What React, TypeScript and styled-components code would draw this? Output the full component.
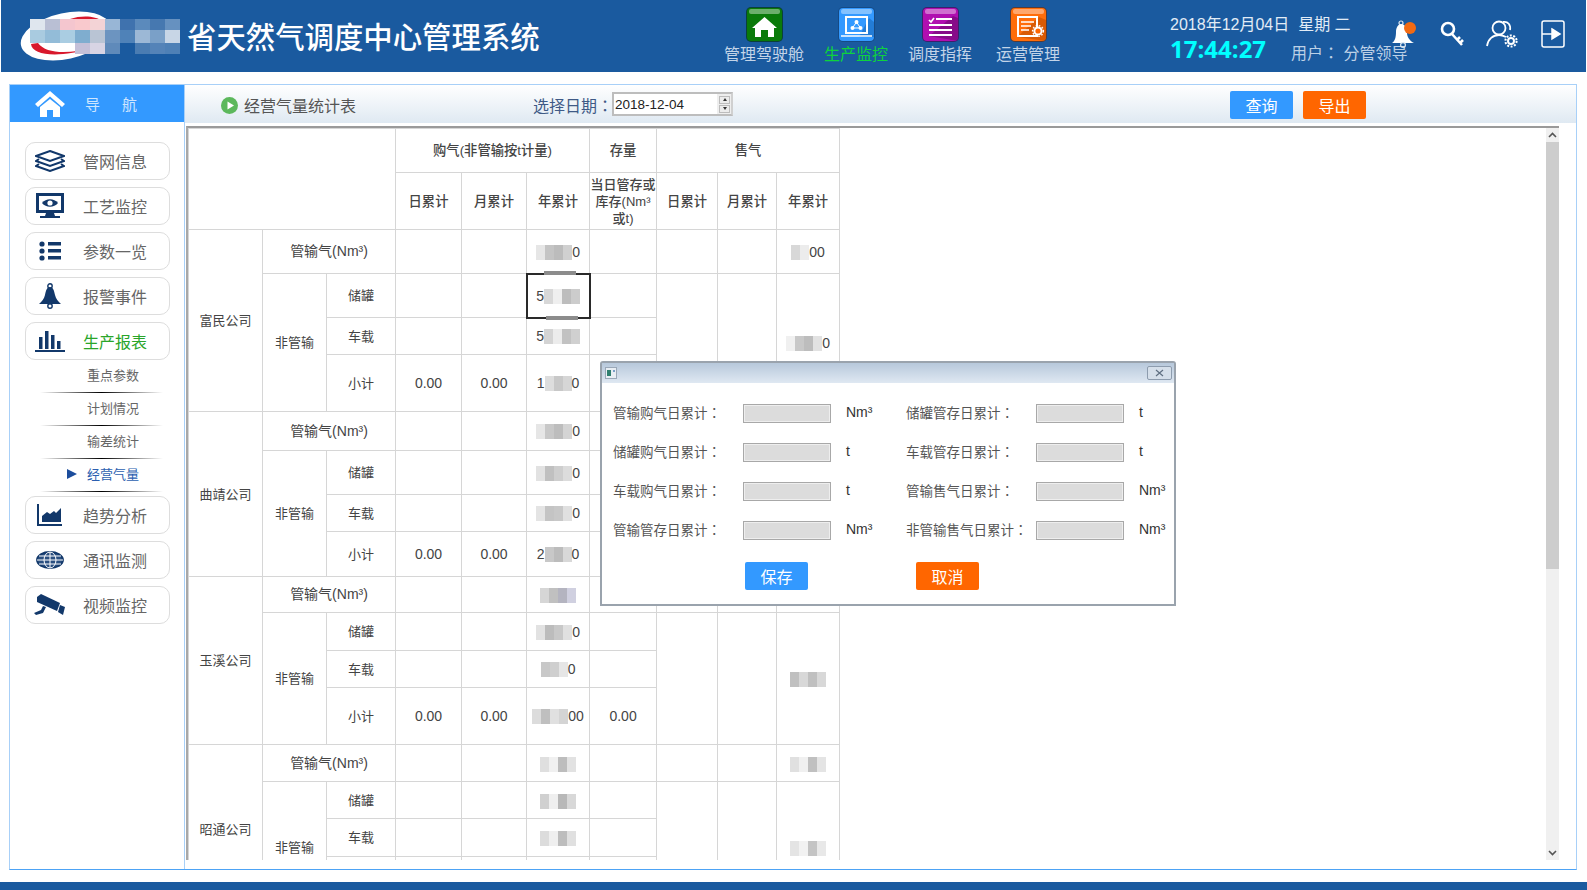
import React from "react";
import styled, { createGlobalStyle } from "styled-components";

const GlobalStyle = createGlobalStyle`
  html, body {
    margin: 0;
    padding: 0;
    background: #fff;
  }
  body {
    width: 1587px;
    height: 890px;
    overflow: hidden;
    font-family: "Liberation Sans", "Noto Sans CJK SC", sans-serif;
  }
`;

const Page = styled.div`
  width: 1587px;
  height: 890px;
  display: flex;
  flex-direction: column;
`;

const Header = styled.header`
  height: 72px;
  margin: 0 1px;
  background: #1a5a9f;
  display: flex;
  align-items: flex-start;
  color: #fff;
`;

const Brand = styled.div`
  width: 723px;
  height: 72px;
  padding-left: 19px;
  box-sizing: border-box;
  display: flex;
  align-items: center;
`;

const Title = styled.h1`
  margin: 0 0 3px 2px;
  font-size: 29.4px;
  font-weight: 500;
  white-space: nowrap;
  font-family: "Noto Sans CJK SC", sans-serif;
`;

const Nav = styled.nav`
  display: flex;
  gap: 20px;
  padding-top: 7px;
`;

const NavItem = styled.div<{ $active?: boolean }>`
  display: flex;
  flex-direction: column;
  align-items: center;
  gap: 1px;
  font-size: 16px;
  line-height: 24px;
  color: ${(p) => (p.$active ? "#0ed33c" : "#c3d4e8")};
  &:last-child {
    margin-left: 4px;
  }
`;

const Tile = styled.div<{ $color: string }>`
  position: relative;
  width: 37px;
  height: 35px;
  box-sizing: border-box;
  border: 1px solid rgba(10, 40, 80, 0.7);
  border-radius: 5px;
  background: ${(p) => p.$color};
  overflow: hidden;
  &::before {
    content: "";
    position: absolute;
    left: 2px;
    right: 2px;
    top: 1px;
    height: 5px;
    border-radius: 2px;
    background: rgba(255, 255, 255, 0.4);
  }
  svg {
    display: block;
  }
`;

const Status = styled.div`
  margin-left: 110px;
  width: 240px;
  padding-top: 14px;
`;

const DateLine = styled.div`
  font-size: 16px;
  line-height: 22px;
  color: #e2ecf6;
  white-space: nowrap;
`;

const TimeRow = styled.div`
  display: flex;
  align-items: flex-end;
`;

const Clock = styled.div`
  font-size: 24px;
  line-height: 26px;
  margin-bottom: 4px;
  font-weight: 700;
  color: #00ffff;
  font-family: "Open Sans", sans-serif;
`;

const UserLine = styled.div`
  margin-left: 25px;
  font-size: 16px;
  line-height: 24px;
  color: #bcd0e6;
  white-space: nowrap;
`;

const Colon = styled.span`
  font-family: "Noto Sans CJK TC", sans-serif;
`;

const ToolIcons = styled.div`
  display: flex;
  align-items: center;
  gap: 22px;
  height: 68px;
  margin-left: -18px;
  svg {
    display: block;
  }
`;

const Frame = styled.div`
  position: relative;
  margin: 12px 10px 0 9px;
  height: 786px;
  box-sizing: border-box;
  border: 1px solid #a8d0f8;
  border-bottom-color: #4da3f5;
  display: flex;
`;

const Sidebar = styled.aside`
  width: 174px;
  border-right: 1px solid #a8d0f8;
  flex: none;
  display: flex;
  flex-direction: column;
`;

const SideHead = styled.div`
  height: 37px;
  background: #3399ff;
  display: flex;
  align-items: center;
  padding-left: 25px;
  color: #cfe6ff;
  font-size: 15px;
  svg {
    display: block;
  }
`;

const SideHeadText = styled.span`
  margin-left: 20px;
  letter-spacing: 22px;
`;

const SideList = styled.div`
  padding: 20px 0 0 15px;
  display: flex;
  flex-direction: column;
  gap: 7px;
`;

const SideButton = styled.div<{ $active?: boolean }>`
  width: 145px;
  height: 38px;
  box-sizing: border-box;
  border: 1px solid #dddddd;
  border-radius: 10px;
  padding-bottom: 1px;
  display: flex;
  align-items: center;
  font-size: 16px;
  color: ${(p) => (p.$active ? "#2aa52a" : "#666666")};
`;

const SideIcon = styled.span`
  width: 48px;
  display: flex;
  justify-content: center;
  margin-right: 9px;
  svg {
    display: block;
  }
`;

const SubNav = styled.div`
  margin: -7px 0 -3px;
`;

const SubItem = styled.div<{ $active?: boolean }>`
  position: relative;
  height: 33px;
  box-sizing: border-box;
  padding: 0 0 4px 62px;
  display: flex;
  align-items: center;
  font-size: 13px;
  color: ${(p) => (p.$active ? "#2c5fb0" : "#666666")};
  &::after {
    content: "";
    position: absolute;
    left: 15px;
    width: 123px;
    bottom: 0;
    height: 1px;
    background: linear-gradient(90deg, transparent, #000 50%, transparent);
  }
  ${(p) =>
    p.$active &&
    `&::before {
      content: "";
      margin-left: -20px;
      margin-right: 10px;
      border-left: 10px solid #1c4d9c;
      border-top: 5.5px solid transparent;
      border-bottom: 5.5px solid transparent;
    }`}
`;

const Main = styled.main`
  flex: 1;
  min-width: 0;
  display: flex;
  flex-direction: column;
`;

const Toolbar = styled.div`
  height: 38px;
  box-sizing: border-box;
  padding: 2px 0 0 36px;
  flex: none;
  display: flex;
  align-items: center;
  background: linear-gradient(#ffffff, #dfe9f2);
  svg {
    display: block;
  }
`;

const ToolbarTitle = styled.span`
  margin-left: 6px;
  font-size: 16px;
  color: #555555;
`;

const DateLabel = styled.span`
  margin-left: 177px;
  width: 79px;
  font-size: 16px;
  white-space: nowrap;
  color: #3f5a86;
`;

const DateBox = styled.div`
  width: 121px;
  height: 24px;
  margin-top: -2px;
  box-sizing: border-box;
  border: 2px solid #bdbdbd;
  border-right-color: #d0d0d0;
  background: linear-gradient(90deg, #fff 88%, #eeeeee 88%);
  display: flex;
  align-items: center;
  justify-content: space-between;
  padding: 0 1px 0 1px;
  font-size: 13.5px;
  color: #222;
`;

const Spin = styled.div`
  display: flex;
  flex-direction: column;
  gap: 1px;
`;

const SpinButton = styled.span<{ $down?: boolean }>`
  width: 11px;
  height: 8px;
  box-sizing: border-box;
  border: 1px solid #bcbcbc;
  background: #ececec;
  display: flex;
  align-items: center;
  justify-content: center;
  &::before {
    content: "";
    border-left: 2.5px solid transparent;
    border-right: 2.5px solid transparent;
    ${(p) => (p.$down ? "border-top: 3px solid #333;" : "border-bottom: 3px solid #333;")}
  }
`;

const ActionButton = styled.div<{ $color: string }>`
  width: 63px;
  height: 28px;
  border-radius: 2px;
  background: ${(p) => p.$color};
  color: #fff;
  font-size: 16px;
  display: flex;
  align-items: center;
  justify-content: center;
`;

const ToolbarActions = styled.div`
  margin-left: auto;
  margin-right: 210px;
  display: flex;
  gap: 10px;
`;

const Pane = styled.div`
  margin: 3px 17px 0 1px;
  height: 734px;
  border-top: 2px solid #9a9a9a;
  border-left: 2px solid #a8a8a8;
  box-sizing: border-box;
  display: flex;
  overflow: hidden;
`;

const TableArea = styled.div`
  flex: 1;
  overflow: hidden;
`;

const Sheet = styled.table`
  border-collapse: collapse;
  table-layout: fixed;
  width: 651px;
  font-size: 13px;
  color: #444444;
`;

const Row = styled.tr<{ $h: number }>`
  height: ${(p) => p.$h}px;
`;

const Cell = styled.td<{ $selected?: boolean }>`
  position: relative;
  border: 1px solid #d6d6d6;
  padding: 0;
  text-align: center;
  vertical-align: middle;
  line-height: 17px;
  ${(p) =>
    p.$selected &&
    `outline: 2px solid #2a2a2a;
     outline-offset: -1px;
     &::before, &::after {
       content: "";
       position: absolute;
       left: 17px;
       width: 32px;
       height: 4px;
       background: #8c8c8c;
     }
     &::before { top: -3px; }
     &::after { bottom: -3px; left: 19px; }`}
`;

const PipeCell = styled(Cell)`
  font-size: 14px;
`;

const HeadCell = styled(Cell).attrs({ as: "th" })`
  font-weight: 500;
  font-size: 13.3px;
`;

const TallHeadText = styled.span`
  display: block;
  margin: 0 -2px;
  white-space: nowrap;
  font-size: 13px;
`;

const Value = styled.span`
  font-size: 14px;
`;

const Mask = styled.span`
  display: inline-flex;
  align-items: center;
  font-size: 14px;
  vertical-align: middle;
`;

const MaskChip = styled.span<{ $shade: string }>`
  width: 9px;
  height: 15px;
  background: ${(p) => p.$shade};
`;

const ScrollBar = styled.div`
  width: 13px;
  flex: none;
  background: #f0f0f0;
  display: flex;
  flex-direction: column;
  align-items: center;
  height: 100%;
`;

const ScrollArrow = styled.span`
  height: 14px;
  flex: none;
  display: flex;
  align-items: center;
  justify-content: center;
  svg {
    display: block;
  }
`;

const ScrollThumb = styled.div`
  width: 100%;
  height: 427px;
  background: #cdcdcd;
`;

const ScrollGap = styled.div`
  flex: 1;
`;

const Modal = styled.div`
  position: absolute;
  left: 590px;
  top: 276px;
  width: 576px;
  height: 245px;
  box-sizing: border-box;
  border: 2px solid #9aa3ad;
  border-radius: 3px 3px 0 0;
  background: #fff;
`;

const ModalBar = styled.div`
  height: 20px;
  background: linear-gradient(#b7c8db, #dfe8f2);
  display: flex;
  align-items: center;
  justify-content: space-between;
  padding: 0 2px 0 3px;
  svg {
    display: block;
  }
`;

const CloseButton = styled.span`
  width: 25px;
  height: 14px;
  box-sizing: border-box;
  border: 1px solid #8d9cae;
  border-radius: 2px;
  background: #d5dfea;
  display: flex;
  align-items: center;
  justify-content: center;
`;

const FieldGrid = styled.div`
  display: grid;
  grid-template-columns: 293px 1fr;
  row-gap: 20px;
  padding: 21px 0 0 11px;
`;

const Field = styled.div`
  display: flex;
  align-items: center;
  height: 19px;
  font-size: 13.5px;
  color: #555555;
`;

const FieldLabel = styled.span`
  width: 130px;
  margin-top: -3px;
  white-space: nowrap;
`;

const FieldInput = styled.span`
  width: 88px;
  height: 19px;
  box-sizing: border-box;
  border: 1px solid #a8a8a8;
  background: #dcdcdc;
  box-shadow: inset 0 0 0 1px #eeeeee;
`;

const FieldUnit = styled.span`
  margin-left: 15px;
  margin-top: -4px;
  font-size: 14px;
  color: #333333;
`;

const ModalActions = styled.div`
  display: flex;
  gap: 108px;
  margin: 22px 0 0 143px;
`;

const Footer = styled.footer`
  margin-top: 12px;
  height: 8px;
  background: #1a5a9f;
`;

function Logo() {
  const cells: (string | null)[][] = [
    ["#dfe6ee", "#b9bfd4", "#f4c6cf", "#f9c9cd", "#f3d3d6", "#98b6d6", "#3f72ae", "#5b8abc", "#4678b0", "#6691c0"],
    ["#a9cbe0", "#93bcd8", "#aacde2", "#7fadcf", "#b9c4d4", "#6c94c0", "#4f82b8", "#9cb8d6", "#7aa0c8", "#c8d6e6"],
    [null, null, null, "#c4c0d8", "#d8d4e4", "#5f8aba", "#1a5a9f", "#4a7cb2", "#5483b8", "#4e80b6"],
  ];
  const rowY = [9, 20, 33];
  const rowH = [11, 13, 11];
  return (
    <svg width="165" height="52" viewBox="0 0 165 52">
      <ellipse cx="46" cy="26" rx="46" ry="23" fill="#fff" transform="rotate(-12 46 26)" />
      <path d="M11 34 C12 46 40 48 73 38 C48 44 26 44 18 33 Z" fill="#d8182c" />
      <path d="M50 9 C62 5 76 6 82 11 C72 9 62 9 50 11 Z" fill="#d8182c" />
      {cells.map((row, r) =>
        row.map((c, i) =>
          c ? <rect key={`${r}-${i}`} x={10 + i * 15} y={rowY[r]} width="15" height={rowH[r]} fill={c} /> : null
        )
      )}
    </svg>
  );
}

const HomeTileIcon = () => (
  <svg width="35" height="33" viewBox="0 0 35 33">
    <path d="M17.5 9 L30 20 H27 V29 H21 V22 H14 V29 H8 V20 H5 Z" fill="#fff" />
  </svg>
);

const ScreenTileIcon = () => (
  <svg width="35" height="33" viewBox="0 0 35 33" fill="none" stroke="#fff">
    <path d="M20 29 L35 29 L35 14 L30 10 Z" fill="#1d6fc4" stroke="none" opacity="0.7" />
    <rect x="7" y="9" width="21" height="16" strokeWidth="2" />
    <path d="M2 28 H33" strokeWidth="1.5" />
    <circle cx="17.5" cy="14" r="2" fill="#fff" stroke="none" />
    <circle cx="13.5" cy="20" r="2" fill="#fff" stroke="none" />
    <circle cx="21.5" cy="20" r="2" fill="#fff" stroke="none" />
    <path d="M17.5 14 L13.5 20 H21.5 Z" strokeWidth="1" />
  </svg>
);

const ListTileIcon = () => (
  <svg width="35" height="33" viewBox="0 0 35 33" fill="none" stroke="#fff">
    <path d="M6 28 L35 33 L35 10 L30 8 Z" fill="#6d0a70" stroke="none" opacity="0.6" />
    <path d="M6 12 L8 14 L11 10" strokeWidth="1.6" />
    <path d="M13 11 H29 M6 17 H29 M6 22 H29 M6 27 H29" strokeWidth="2" />
  </svg>
);

const DocTileIcon = () => (
  <svg width="35" height="33" viewBox="0 0 35 33" fill="none" stroke="#fff">
    <path d="M6 29 L35 33 L35 12 L28 9 Z" fill="#c04f00" stroke="none" opacity="0.6" />
    <rect x="7" y="9" width="19" height="19" strokeWidth="2" />
    <path d="M10 14 H23 M10 18 H20 M10 22 H18" strokeWidth="1.5" />
    <circle cx="27" cy="23" r="3.6" fill="#ff6600" strokeWidth="2" />
    <circle cx="27" cy="23" r="5.4" strokeWidth="1.4" strokeDasharray="1.6 1.6" />
  </svg>
);

const BellHeaderIcon = () => (
  <svg width="26" height="30" viewBox="0 0 26 30">
    <circle cx="9" cy="4" r="2" fill="none" stroke="#dfe8f2" strokeWidth="1.2" />
    <path d="M9 5 C13 5 15 9 15 14 C15 18 18 22 22 24 H0 C3 22 4 18 4 13 C4 9 6 5 9 5 Z" fill="#fff" />
    <circle cx="11" cy="26" r="2.4" fill="none" stroke="#dfe8f2" strokeWidth="1.2" />
    <circle cx="18" cy="9" r="6" fill="#f26a12" />
  </svg>
);

const KeyHeaderIcon = () => (
  <svg width="24" height="26" viewBox="0 0 24 26" fill="none" stroke="#fff" strokeWidth="2.6">
    <circle cx="8" cy="8" r="6" />
    <path d="M12 13 L22 24 M17 19 L20 16 M20 22 L23 19" />
  </svg>
);

const UserHeaderIcon = () => (
  <svg width="33" height="30" viewBox="0 0 33 30" fill="none" stroke="#fff" strokeWidth="1.8">
    <circle cx="13" cy="9" r="6.5" />
    <path d="M1 27 C2 20 7 16 13 16 C16 16 18 17 20 18" />
    <path d="M17 3 C22 2 25 6 24 11" />
    <circle cx="25" cy="22" r="3" strokeWidth="2" />
    <circle cx="25" cy="22" r="5.6" strokeWidth="2" strokeDasharray="2 1.5" />
  </svg>
);

const ExitHeaderIcon = () => (
  <svg width="24" height="28" viewBox="0 0 24 28" fill="none" stroke="#fff" strokeWidth="1.5">
    <rect x="1" y="1" width="22" height="26" rx="2" />
    <path d="M1 14 H11" />
    <path d="M11 9 L19 14 L11 19 Z" fill="#fff" />
  </svg>
);

const navy = "#12386a";

const LayersIcon = () => (
  <svg width="30" height="22" viewBox="0 0 30 22" fill="none" stroke={navy} strokeWidth="2">
    <path d="M15 1 L29 6 L15 11 L1 6 Z" />
    <path d="M4 9 L1 11 L15 16 L29 11 L26 9" />
    <path d="M4 14 L1 16 L15 21 L29 16 L26 14" />
  </svg>
);

const ScreenIcon = () => (
  <svg width="28" height="25" viewBox="0 0 28 25">
    <rect x="1.5" y="1.5" width="25" height="17" fill="none" stroke={navy} strokeWidth="3" />
    <path d="M6 10 C10 5 18 5 22 10 C18 15 10 15 6 10 Z" fill={navy} />
    <circle cx="14" cy="10" r="2.6" fill="#fff" />
    <path d="M10 20 H18 L19 23 H24 V25 H4 V23 H9 Z" fill={navy} />
  </svg>
);

const ListIcon = () => (
  <svg width="22" height="20" viewBox="0 0 22 20" fill={navy}>
    <circle cx="3" cy="3" r="2.6" />
    <circle cx="3" cy="10" r="2.6" />
    <circle cx="3" cy="17" r="2.6" />
    <rect x="9" y="1" width="13" height="3.5" />
    <rect x="9" y="8" width="13" height="3.5" />
    <rect x="9" y="15" width="13" height="3.5" />
  </svg>
);

const BellIcon = () => (
  <svg width="24" height="26" viewBox="0 0 24 26">
    <circle cx="12" cy="3" r="2.2" fill="none" stroke={navy} strokeWidth="1.4" />
    <path d="M12 4 C15 4 16 7 17 12 C18 16 20 18 23 21 H1 C4 18 6 16 7 12 C8 7 9 4 12 4 Z" fill={navy} />
    <circle cx="12" cy="23" r="2.2" fill="none" stroke={navy} strokeWidth="1.4" />
  </svg>
);

const BarsIcon = () => (
  <svg width="30" height="22" viewBox="0 0 30 22" fill={navy}>
    <rect x="4" y="7" width="3.5" height="12" />
    <rect x="10" y="1" width="3.5" height="18" />
    <rect x="16" y="5" width="3.5" height="14" />
    <rect x="22" y="11" width="3.5" height="8" />
    <rect x="0" y="20" width="30" height="2" />
  </svg>
);

const AreaIcon = () => (
  <svg width="26" height="22" viewBox="0 0 26 22" fill={navy}>
    <rect x="0" y="0" width="2" height="22" />
    <rect x="0" y="20" width="25" height="2" />
    <path d="M5 18 V12 L10 8 L13 10 L17 7 L19 9 L24 4 V18 Z" />
  </svg>
);

const GlobeIcon = () => (
  <svg width="28" height="18" viewBox="0 0 28 18" fill="none" stroke={navy} strokeWidth="1.8">
    <ellipse cx="14" cy="9" rx="13" ry="8" fill="#2a4f80" />
    <ellipse cx="14" cy="9" rx="6" ry="8" stroke="#fff" strokeWidth="1" />
    <path d="M14 1 V17 M1 9 H27 M3 5 H25 M3 13 H25" stroke="#fff" strokeWidth="1" />
  </svg>
);

const CameraIcon = () => (
  <svg width="32" height="22" viewBox="0 0 32 22" fill={navy}>
    <path d="M3 3 L7 0 L26 9 L23 17 L3 8 Z" />
    <path d="M26 11 L31 13 L29 21 L24 18 Z" />
    <path d="M0 19 L2 21 L9 19 L12 13 L9 12 L7 16 Z" />
  </svg>
);

const sideTop = [
  { label: "管网信息", icon: <LayersIcon /> },
  { label: "工艺监控", icon: <ScreenIcon /> },
  { label: "参数一览", icon: <ListIcon /> },
  { label: "报警事件", icon: <BellIcon /> },
];

const sideBottom = [
  { label: "趋势分析", icon: <AreaIcon /> },
  { label: "通讯监测", icon: <GlobeIcon /> },
  { label: "视频监控", icon: <CameraIcon /> },
];

const subItems = ["重点参数", "计划情况", "输差统计", "经营气量"];

const navItems = [
  { label: "管理驾驶舱", color: "#0a7a0a", icon: <HomeTileIcon /> },
  { label: "生产监控", color: "#3399ff", icon: <ScreenTileIcon />, active: true },
  { label: "调度指挥", color: "#b00fb0", icon: <ListTileIcon /> },
  { label: "运营管理", color: "#ff6d0a", icon: <DocTileIcon /> },
];

type Masked = { shades: string[]; tail?: string; lead?: string };

function Blurred({ value }: { value?: Masked }) {
  if (!value) return null;
  return (
    <Mask>
      {value.lead}
      {value.shades.map((s, i) => (
        <MaskChip key={i} $shade={s} />
      ))}
      {value.tail}
    </Mask>
  );
}

type Company = {
  name: string;
  heights: number[];
  pipe: Masked;
  pipeSold?: Masked;
  tank: Masked;
  truck: Masked;
  sum: Masked;
  sold: Masked;
};

const companies: Company[] = [
  {
    name: "富民公司",
    heights: [44, 44, 37, 57],
    pipe: { shades: ["#e6e6e6", "#c4c4c4", "#bcbcbc", "#d0d0d0"], tail: "0" },
    pipeSold: { shades: ["#d8d8d8", "#ececec"], tail: "00" },
    tank: { lead: "5", shades: ["#d8d8d8", "#efefef", "#bdbdbd", "#cccccc"] },
    truck: { lead: "5", shades: ["#d4d4d4", "#ececec", "#c2c2c2", "#d0d0d0"] },
    sum: { lead: "1", shades: ["#dddddd", "#c8c8c8", "#d6d6d6"], tail: "0" },
    sold: { shades: ["#f0f0f0", "#c8c8c8", "#bdbdbd", "#e2e2e2"], tail: "0" },
  },
  {
    name: "曲靖公司",
    heights: [39, 44, 37, 45],
    pipe: { shades: ["#e6e6e6", "#c8c8c8", "#bdbdbd", "#d4d4d4"], tail: "0" },
    tank: { shades: ["#e2e2e2", "#c0c0c0", "#cecece", "#dcdcdc"], tail: "0" },
    truck: { shades: ["#e4e4e4", "#c4c4c4", "#c8c8c8", "#e0e0e0"], tail: "0" },
    sum: { lead: "2", shades: ["#c8c8c8", "#bcbcbc", "#d8d8d8"], tail: "0" },
    sold: { shades: ["#e8e8e8", "#cccccc", "#d8d8d8"], tail: "0" },
  },
  {
    name: "玉溪公司",
    heights: [36, 38, 37, 57],
    pipe: { shades: ["#d6d6d6", "#c0c0c0", "#b4b4c0", "#d0d0e0"] },
    tank: { shades: ["#e2e2e2", "#bcbcbc", "#c8c8c8", "#e0e0e0"], tail: "0" },
    truck: { shades: ["#c8c8c8", "#cfcfcf", "#e6e6e6"], tail: "0" },
    sum: { shades: ["#dcdcdc", "#bfbfbf", "#e0e0e0", "#d4d4d4"], tail: "00" },
    sold: { shades: ["#c0c0c0", "#d8d8d8", "#c0c0c0", "#d8d8d8"] },
  },
  {
    name: "昭通公司",
    heights: [37, 37, 38, 57],
    pipe: { shades: ["#dfdfdf", "#f0f0f0", "#bdbdbd", "#e2e2e2"] },
    pipeSold: { shades: ["#e0e0e0", "#f0f0f0", "#c0c0c0", "#e4e4e4"] },
    tank: { shades: ["#d0d0d0", "#efefef", "#b8b8b8", "#d8d8d8"] },
    truck: { shades: ["#dcdcdc", "#efefef", "#bdbdbd", "#e0e0e0"] },
    sum: { shades: ["#dcdcdc", "#efefef", "#c8c8c8"] },
    sold: { shades: ["#e4e4e4", "#f2f2f2", "#c4c4c4", "#e8e8e8"] },
  },
];

const colWidths = [74, 64, 69, 66, 65, 63, 67, 61, 59, 63];

function CompanyRows({ data, first }: { data: Company; first: boolean }) {
  const [h1, h2, h3, h4] = data.heights;
  return (
    <>
      <Row $h={h1}>
        <Cell rowSpan={4}>{data.name}</Cell>
        <PipeCell colSpan={2}>管输气(Nm³)</PipeCell>
        <Cell />
        <Cell />
        <Cell>
          <Blurred value={data.pipe} />
        </Cell>
        <Cell />
        <Cell />
        <Cell />
        <Cell>
          <Blurred value={data.pipeSold} />
        </Cell>
      </Row>
      <Row $h={h2}>
        <Cell rowSpan={3}>非管输</Cell>
        <Cell>储罐</Cell>
        <Cell />
        <Cell />
        <Cell $selected={first}>
          <Blurred value={data.tank} />
        </Cell>
        <Cell />
        <Cell rowSpan={3} />
        <Cell rowSpan={3} />
        <Cell rowSpan={3}>
          <Blurred value={data.sold} />
        </Cell>
      </Row>
      <Row $h={h3}>
        <Cell>车载</Cell>
        <Cell />
        <Cell />
        <Cell>
          <Blurred value={data.truck} />
        </Cell>
        <Cell />
      </Row>
      <Row $h={h4}>
        <Cell>小计</Cell>
        <Cell>
          <Value>0.00</Value>
        </Cell>
        <Cell>
          <Value>0.00</Value>
        </Cell>
        <Cell>
          <Blurred value={data.sum} />
        </Cell>
        <Cell>
          <Value>0.00</Value>
        </Cell>
      </Row>
    </>
  );
}

const fieldRows = [
  ["管输购气日累计", "Nm³", "储罐管存日累计", "t"],
  ["储罐购气日累计", "t", "车载管存日累计", "t"],
  ["车载购气日累计", "t", "管输售气日累计", "Nm³"],
  ["管输管存日累计", "Nm³", "非管输售气日累计", "Nm³"],
];

function DailyDialog() {
  return (
    <Modal>
      <ModalBar>
        <svg width="12" height="12" viewBox="0 0 12 12">
          <rect x="0.5" y="0.5" width="11" height="11" fill="#e8eef4" stroke="#9aa8b8" />
          <rect x="2" y="3" width="4" height="6" fill="#2f7f6f" />
          <rect x="8" y="3" width="2" height="2" fill="#7aa0c8" />
        </svg>
        <CloseButton>
          <svg width="9" height="8" viewBox="0 0 9 8" fill="none" stroke="#5f6f82" strokeWidth="1.2">
            <path d="M1 1 L8 7 M8 1 L1 7" />
          </svg>
        </CloseButton>
      </ModalBar>
      <FieldGrid>
        {fieldRows.map((r) => (
          <React.Fragment key={r[0]}>
            <Field>
              <FieldLabel>
                {r[0]}
                <Colon>：</Colon>
              </FieldLabel>
              <FieldInput />
              <FieldUnit>{r[1]}</FieldUnit>
            </Field>
            <Field>
              <FieldLabel>
                {r[2]}
                <Colon>：</Colon>
              </FieldLabel>
              <FieldInput />
              <FieldUnit>{r[3]}</FieldUnit>
            </Field>
          </React.Fragment>
        ))}
      </FieldGrid>
      <ModalActions>
        <ActionButton $color="#3399ff">保存</ActionButton>
        <ActionButton $color="#ff6600">取消</ActionButton>
      </ModalActions>
    </Modal>
  );
}

export default function App() {
  return (
    <Page>
      <GlobalStyle />
      <Header>
        <Brand>
          <Logo />
          <Title>省天然气调度中心管理系统</Title>
        </Brand>
        <Nav>
          {navItems.map((item) => (
            <NavItem key={item.label} $active={item.active}>
              <Tile $color={item.color}>{item.icon}</Tile>
              {item.label}
            </NavItem>
          ))}
        </Nav>
        <Status>
          <DateLine>2018年12月04日&nbsp;&nbsp;星期 二</DateLine>
          <TimeRow>
            <Clock>17:44:27</Clock>
            <UserLine>
              用户<Colon>：</Colon> 分管领导
            </UserLine>
          </TimeRow>
        </Status>
        <ToolIcons>
          <BellHeaderIcon />
          <KeyHeaderIcon />
          <UserHeaderIcon />
          <ExitHeaderIcon />
        </ToolIcons>
      </Header>
      <Frame>
        <Sidebar>
          <SideHead>
            <svg width="30" height="26" viewBox="0 0 30 26" fill="#fff">
              <path d="M15 0 L30 13 L27 16 L15 5.5 L3 16 L0 13 Z" />
              <path d="M5 16 L15 8 L25 16 V26 H18 V19 H12 V26 H5 Z" />
            </svg>
            <SideHeadText>导航</SideHeadText>
          </SideHead>
          <SideList>
            {sideTop.map((s) => (
              <SideButton key={s.label}>
                <SideIcon>{s.icon}</SideIcon>
                {s.label}
              </SideButton>
            ))}
            <SideButton $active>
              <SideIcon>
                <BarsIcon />
              </SideIcon>
              生产报表
            </SideButton>
            <SubNav>
              {subItems.map((s, i) => (
                <SubItem key={s} $active={i === 3}>
                  {s}
                </SubItem>
              ))}
            </SubNav>
            {sideBottom.map((s) => (
              <SideButton key={s.label}>
                <SideIcon>{s.icon}</SideIcon>
                {s.label}
              </SideButton>
            ))}
          </SideList>
        </Sidebar>
        <Main>
          <Toolbar>
            <svg width="17" height="17" viewBox="0 0 17 17">
              <circle cx="8.5" cy="8.5" r="8.5" fill="#5cb85c" />
              <path d="M6.5 4.5 L13 8.5 L6.5 12.5 Z" fill="#fff" />
            </svg>
            <ToolbarTitle>经营气量统计表</ToolbarTitle>
            <DateLabel>
              选择日期<Colon>：</Colon>
            </DateLabel>
            <DateBox>
              2018-12-04
              <Spin>
                <SpinButton />
                <SpinButton $down />
              </Spin>
            </DateBox>
            <ToolbarActions>
              <ActionButton $color="#3399ff">查询</ActionButton>
              <ActionButton $color="#ff6600">导出</ActionButton>
            </ToolbarActions>
          </Toolbar>
          <Pane>
            <TableArea>
              <Sheet>
                <colgroup>
                  {colWidths.map((w, i) => (
                    <col key={i} style={{ width: w }} />
                  ))}
                </colgroup>
                <thead>
                  <Row $h={44}>
                    <HeadCell colSpan={3} rowSpan={2} />
                    <HeadCell colSpan={3}>购气(非管输按t计量)</HeadCell>
                    <HeadCell>存量</HeadCell>
                    <HeadCell colSpan={3}>售气</HeadCell>
                  </Row>
                  <Row $h={57}>
                    <HeadCell>日累计</HeadCell>
                    <HeadCell>月累计</HeadCell>
                    <HeadCell>年累计</HeadCell>
                    <HeadCell>
                      <TallHeadText>
                        当日管存或
                        <br />
                        库存(Nm³
                        <br />
                        或t)
                      </TallHeadText>
                    </HeadCell>
                    <HeadCell>日累计</HeadCell>
                    <HeadCell>月累计</HeadCell>
                    <HeadCell>年累计</HeadCell>
                  </Row>
                </thead>
                <tbody>
                  {companies.map((c, i) => (
                    <CompanyRows key={c.name} data={c} first={i === 0} />
                  ))}
                </tbody>
              </Sheet>
            </TableArea>
            <ScrollBar>
              <ScrollArrow>
                <svg width="9" height="6" viewBox="0 0 9 6" fill="none" stroke="#555" strokeWidth="1.6">
                  <path d="M1 5 L4.5 1.5 L8 5" />
                </svg>
              </ScrollArrow>
              <ScrollThumb />
              <ScrollGap />
              <ScrollArrow>
                <svg width="9" height="6" viewBox="0 0 9 6" fill="none" stroke="#555" strokeWidth="1.6">
                  <path d="M1 1 L4.5 4.5 L8 1" />
                </svg>
              </ScrollArrow>
            </ScrollBar>
          </Pane>
        </Main>
        <DailyDialog />
      </Frame>
      <Footer />
    </Page>
  );
}
